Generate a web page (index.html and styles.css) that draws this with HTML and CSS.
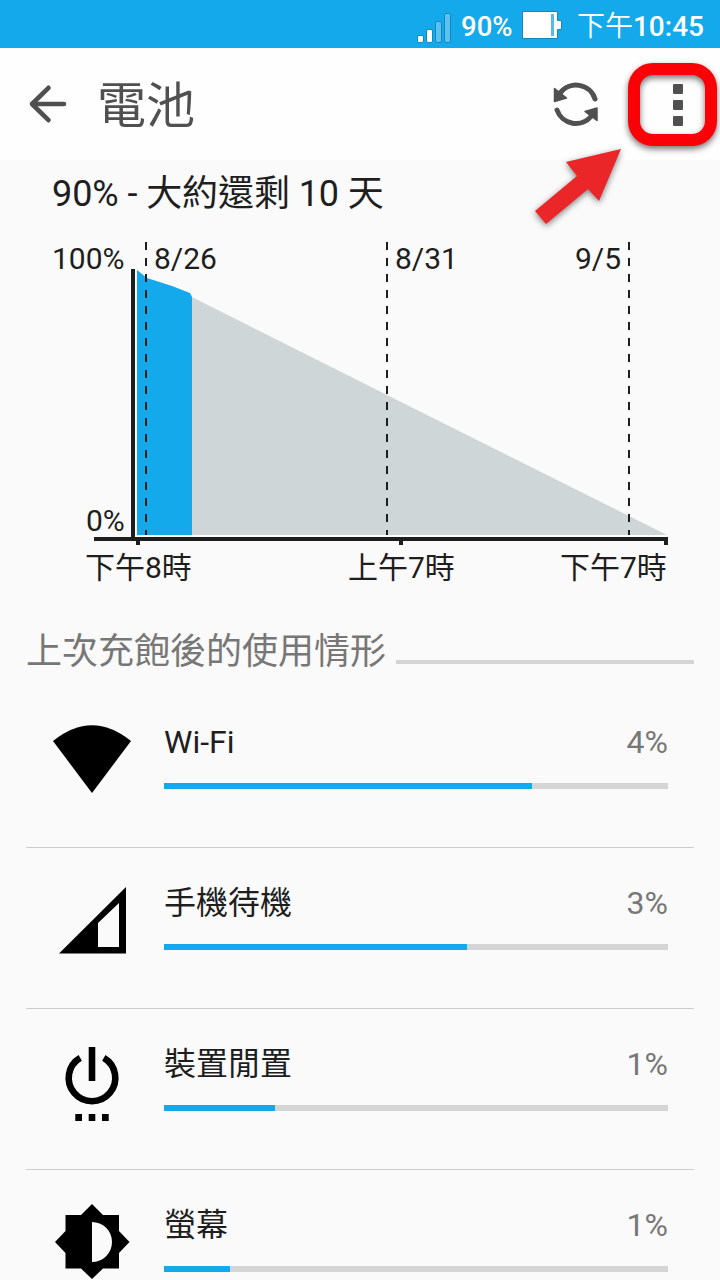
FILE: index.html
```html
<!DOCTYPE html>
<html lang="zh-Hant-TW">
<head>
<meta charset="utf-8">
<title>電池</title>
<link rel="stylesheet" href="styles.css">
</head>
<body>
<div class="screen">
  <div class="status">
    <svg class="signal" width="36" height="32" viewBox="0 0 36 32" stroke="#1388bd" stroke-width="1">
      <rect x=".5" y="23.500" width="6" height="7" rx="1.500" fill="#fff"/>
      <rect x="9.500" y="17.500" width="6" height="13" rx="1.500" fill="#fff"/>
      <rect x="18.500" y="9.500" width="6" height="21" rx="1.500" fill="#5cc0f0"/>
      <rect x="27.500" y="1.500" width="6" height="29" rx="1.500" fill="#5cc0f0"/>
    </svg>
    <span class="level">90%</span>
    <svg class="cell" width="40" height="30" viewBox="0 0 40 30">
      <path d="M.5 1.500H35.500V10.500H39.500V19.500H35.500V28.500H.5Z" fill="#fff" stroke="#1388bd"/>
      <rect x="29" y="4" width="3" height="22" fill="#5cb9e6"/>
    </svg>
    <span class="clock"><span class="ampm">下午</span>10:45</span>
  </div>

  <header class="bar">
    <svg class="back" width="40" height="40" viewBox="0 0 40 40" fill="none" stroke="#505050" stroke-width="4.600" stroke-linecap="round" stroke-linejoin="round">
      <path d="M36 20H4M20.500 3.800L4 20L20.500 36.200"/>
    </svg>
    <h1 class="title">電池</h1>
    <svg class="refresh" width="46" height="46" viewBox="0 0 46 46">
      <g fill="none" stroke="#505050" stroke-width="5" stroke-linecap="round">
        <path d="M42 18A20 20 0 0 0 7 12"/>
        <path d="M4 29A20 20 0 0 0 38.500 35"/>
      </g>
      <path d="M1.500 7.500L13.500 17L1.500 20.500Z" fill="#505050" stroke="#505050" stroke-width="1.500" stroke-linejoin="round"/>
      <path d="M44 27V39.500L32 30.500Z" fill="#505050" stroke="#505050" stroke-width="1.500" stroke-linejoin="round"/>
    </svg>
    <div class="more"><i></i><i></i><i></i></div>
    <div class="ring"></div>
    <svg class="pointer" width="100" height="90" viewBox="0 0 100 90">
      <path d="M91 9L69 61L58 49L16 84L5 71L47 36L36 22Z" fill="#eb2629"/>
    </svg>
  </header>

  <section class="summary">
    <h2 class="estimate">90% - 大約還剩 10 天</h2>
    <svg class="chart" width="720" height="372" viewBox="0 228 720 372">
      <path d="M192 297L387 395L667 535H192Z" fill="#ced6d8"/>
      <path d="M137 270L147 278L172 286L190 293L192 297V535H137Z" fill="#14a9eb"/>
      <path class="halo" d="M136 270V536H666"/>
      <path class="grid" d="M146 242V535M387 242V535M629 242V535"/>
      <path class="axis" d="M133 269V539M94 539H668"/>
      <path class="axis" d="M138 539V545M401 539V545M666 539V545"/>
      <text x="52" y="269">100%</text>
      <text x="86" y="531">0%</text>
      <text x="154" y="269">8/26</text>
      <text x="395" y="269">8/31</text>
      <text x="575" y="269">9/5</text>
      <text x="85" y="578">下午8時</text>
      <text x="348" y="578">上午7時</text>
      <text x="560" y="578">下午7時</text>
    </svg>
  </section>

  <div class="heading"><h3>上次充飽後的使用情形</h3><div class="rule"></div></div>

  <ul class="usage">
    <li class="row">
      <svg class="icon" width="84" height="84" viewBox="0 0 84 84"><path d="M3 21Q42-10.500 81 21L42 73Z"/></svg>
      <div class="info">
        <div class="line"><span>Wi-Fi</span><span class="pct">4%</span></div>
        <div class="track"><div class="fill" style="width:368px"></div></div>
      </div>
    </li>
    <li class="row">
      <svg class="icon" width="84" height="84" viewBox="0 0 84 84"><path fill-rule="evenodd" d="M76 6V72.500H9ZM69 22L48 42V66H69Z"/></svg>
      <div class="info">
        <div class="line"><span class="name">手機待機</span><span class="pct">3%</span></div>
        <div class="track"><div class="fill" style="width:303px"></div></div>
      </div>
    </li>
    <li class="row">
      <svg class="icon" width="84" height="84" viewBox="0 0 84 84">
        <path d="M30.200 15.800A23.300 23.300 0 1 0 53.800 15.800" fill="none" stroke="#000" stroke-width="6.600"/>
        <path d="M38.700 5H45.300V39H38.700ZM25.300 72H32V79H25.300ZM38.700 72H45.300V79H38.700ZM52 72H58.700V79H52Z"/>
      </svg>
      <div class="info">
        <div class="line"><span class="name">裝置閒置</span><span class="pct">1%</span></div>
        <div class="track"><div class="fill" style="width:111px"></div></div>
      </div>
    </li>
    <li class="row">
      <svg class="icon" width="84" height="84" viewBox="0 0 84 84"><path fill-rule="evenodd" d="M42 1L53 12H69V28L79.500 39L69 50V65.500H53L42 76L31 65.500H15.500V50L5 39L15.500 28V12H31ZM42 19V59A20 20 0 0 0 42 19Z"/></svg>
      <div class="info">
        <div class="line"><span class="name">螢幕</span><span class="pct">1%</span></div>
        <div class="track"><div class="fill" style="width:66px"></div></div>
      </div>
    </li>
  </ul>
</div>
</body>
</html>
```

FILE: styles.css
```css
* { box-sizing: border-box; }
body { margin: 0; }
.screen {
  width: 720px;
  height: 1280px;
  overflow: hidden;
  background: #fafafa;
  color: #1e1e1e;
  font-family: Roboto, "Noto Sans CJK TC", sans-serif;
}
svg { display: block; flex: none; }
h1, h2, h3, ul { margin: 0; padding: 0; font-weight: 400; }

.status {
  display: flex;
  height: 48px;
  padding: 0 16px 0 417px;
  background: #14a9eb;
  color: #fff;
  font-size: 28px;
  font-weight: 500;
  line-height: 54px;
}
.signal { margin-top: 12px; }
.level { width: 69px; padding-left: 8px; font-size: 27.5px; }
.cell { margin-top: 10px; }
.clock { flex: 1; text-align: right; white-space: nowrap; }
.ampm { font-weight: 350; }

.bar {
  position: relative;
  display: flex;
  align-items: center;
  height: 112px;
  padding-left: 28px;
  background: #fefefe;
}
.title { width: 456px; margin-left: 29px; padding-top: 5px; font-size: 49px; line-height: 64px; color: #505050; }
.more { display: flex; flex-direction: column; gap: 6px; margin-left: 74px; margin-top: 1px; }
.more i { width: 10px; height: 10px; border-radius: 1px; background: #505050; }
.ring {
  position: absolute;
  left: 628px;
  top: 15px;
  width: 89px;
  height: 83px;
  border: 12px solid #fb0007;
  border-radius: 25px;
  filter: drop-shadow(0 3px 3px rgba(0, 0, 0, .55));
}
.pointer {
  position: absolute;
  left: 530px;
  top: 92px;
  filter: drop-shadow(0 2px 3px rgba(0, 0, 0, .5));
}

.estimate { height: 68px; padding-left: 52px; font-size: 36px; line-height: 68px; letter-spacing: -.08px; white-space: pre; }
.chart { font-size: 30px; fill: #1e1e1e; }
.grid { fill: none; stroke: #1e1e1e; stroke-width: 2; stroke-dasharray: 8 8; }
.axis { fill: none; stroke: #1e1e1e; stroke-width: 4; }
.halo { fill: none; stroke: #fff; stroke-width: 2; }

.heading { display: flex; height: 87px; padding: 0 26px; }
.heading h3 { width: 370px; font-size: 36px; line-height: 104px; color: #777; white-space: nowrap; }
.rule { flex: 1; height: 4px; margin-top: 60px; background: #d4d4d4; }

.usage { list-style: none; margin: 0 26px; }
.row { display: flex; height: 161px; padding: 33px 26px 0 24px; border-bottom: 1px solid #cecece; }
.info { flex: 1; margin-left: 30px; }
.line { display: flex; justify-content: space-between; height: 63px; font-size: 32px; line-height: 44px; }
.name { line-height: 45px; }
.pct { color: #777; }
.track { height: 6px; background: #d5d5d5; }
.fill { height: 6px; background: #14a9eb; }
```
